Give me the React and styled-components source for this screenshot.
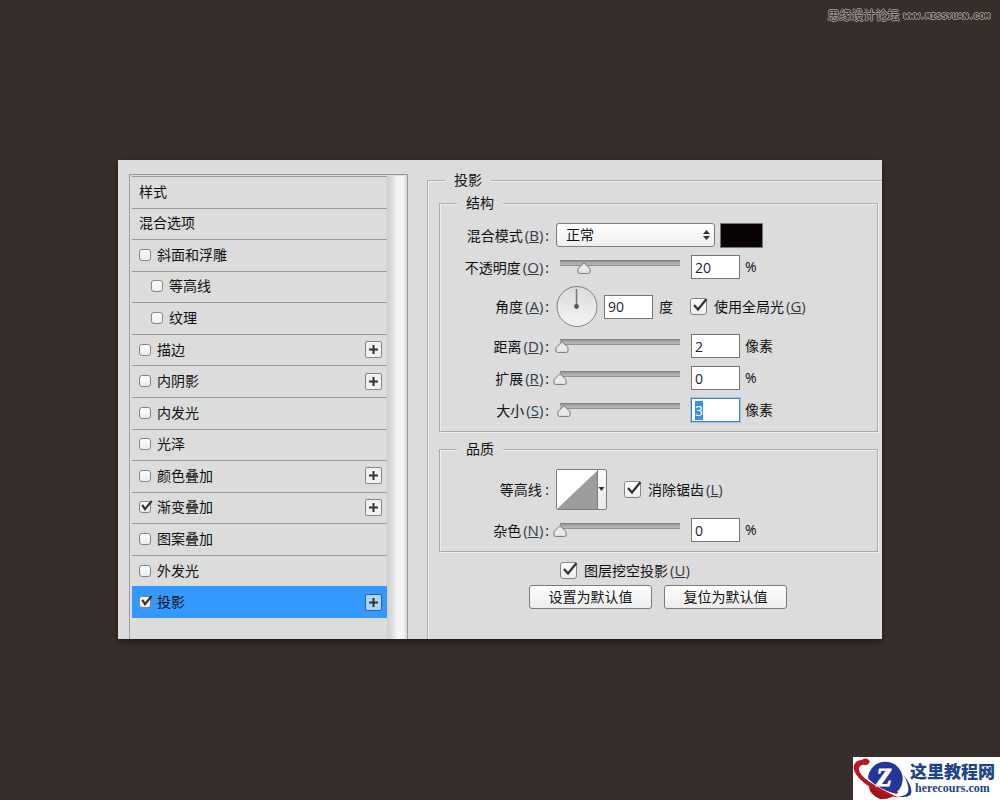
import React, { useEffect, useRef, useState } from 'react';
import styled, { createGlobalStyle, css } from 'styled-components';

const GlobalStyle = createGlobalStyle`
  * {
    box-sizing: border-box;
  }

  body {
    margin: 0;
    background: #372d2b;
    color: #111;
    font-family: "Open Sans", "Noto Sans CJK SC", sans-serif;
    font-size: 14px;
    line-height: 20px;
  }

  button, input, select {
    font: inherit;
    color: inherit;
    margin: 0;
  }
`;

const Page = styled.div`
  min-height: 100vh;
  display: grid;
  grid-template-rows: 160px auto 1fr;
`;

const TopBar = styled.header`
  display: flex;
  justify-content: flex-end;
  align-items: flex-start;
  gap: 4px;
  padding: 6px 10px;
  color: #2b2422;
  text-shadow: 1px 0 #a5a09c, -1px 0 #a5a09c, 0 1px #a5a09c, 0 -1px #a5a09c;
`;

const ForumName = styled.span`
  font-size: 12px;
`;

const ForumUrl = styled.span`
  font-family: "Liberation Mono", monospace;
  font-size: 9px;
  font-weight: 700;
  line-height: 22px;
`;

const Dialog = styled.main`
  display: grid;
  grid-template-columns: 279px 1fr;
  gap: 19px;
  margin: 0 118px;
  padding-left: 11px;
  background: #dcdcdc;
  box-shadow: 0 3px 6px rgba(0, 0, 0, 0.45);
  overflow: hidden;
`;

/* left side */

const StylePanel = styled.section`
  display: flex;
  margin-top: 14px;
  padding: 1px 0 0 2px;
  border: 1px solid #9a9a9a;
  border-bottom: 0;
`;

const StyleList = styled.ul`
  flex: 1;
  display: grid;
  grid-auto-rows: 1fr;
  margin: 0 0 21px;
  padding: 0;
  list-style: none;
`;

const StyleRow = styled.li`
  display: flex;
  align-items: center;
  gap: 6px;
  padding: 0 5px 1px ${({ $sub }) => ($sub ? '19px' : '7px')};
  border-top: 1px solid #9a9a9a;

  ${({ $active }) =>
    $active &&
    css`
      background: #3399ff;
      border-color: #3399ff;
    `}
`;

const StyleName = styled.label`
  flex: 1;
`;

const ScrollTrack = styled.div`
  width: 20px;
  background: linear-gradient(90deg, #cfcfcf, #dcdcdc 25%, #f4f4f4 50%, #f6f6f6 80%, #d6d6d6);
`;

const AddButton = styled.button`
  display: flex;
  align-items: center;
  justify-content: center;
  width: 17px;
  height: 17px;
  padding: 0;
  border: 1px solid ${({ $active }) => ($active ? '#2c5f95' : '#858585')};
  border-radius: 2px;
  background: ${({ $active }) => ($active ? '#a9d4fb' : '#f0f0f0')};
`;

const BoxFrame = styled.span`
  display: grid;
  flex: none;

  > * {
    grid-area: 1 / 1;
  }

  svg {
    pointer-events: none;
    overflow: visible;
  }
`;

const Box = styled.input`
  appearance: none;
  width: ${({ $size }) => $size}px;
  height: ${({ $size }) => $size}px;
  border: 1px solid #868686;
  border-radius: 3px;
  background: linear-gradient(#fff, #ececec);

  & + svg {
    visibility: hidden;
  }

  &:checked + svg {
    visibility: visible;
  }
`;

/* right side */

const Settings = styled.section`
  display: flex;
  padding-top: 9px;
`;

const Group = styled.fieldset`
  flex: 1;
  min-width: 0;
  margin: 0;
  padding: 0 4px 30px 11px;
  border: 1px solid #ababab;
  border-width: 1px 0 0 1px;
  box-shadow: inset 1px 1px #f0f0f0;
`;

const GroupTitle = styled.legend`
  margin-left: 6px;
  padding: 0 9px;
  height: 22px;
  line-height: 22px;
  background: #dcdcdc;
`;

const SubGroup = styled.fieldset`
  min-width: 0;
  margin: 0 0 5px;
  padding: 4px 0 5px;
  border: 1px solid #ababab;
  box-shadow: inset 1px 1px #f0f0f0, 1px 1px #f0f0f0;

  ${GroupTitle} {
    margin-left: 17px;
    height: 24px;
    line-height: 24px;
  }
`;

const Row = styled.div`
  display: grid;
  grid-template-columns: 109px 1fr;
  align-items: center;
  gap: 7px;
  min-height: 32px;
  padding: ${({ $pad = 0 }) => $pad}px 0;
`;

const RowLabel = styled.label`
  text-align: right;
  white-space: nowrap;
`;

const KeyText = styled.span`
  margin: 0 2px;
  color: #333b48;
  font-size: 15px;
`;

const Controls = styled.div`
  display: flex;
  align-items: center;
  gap: ${({ $gap = 5 }) => $gap}px;
`;

const SelectFrame = styled.div`
  display: grid;
  align-items: center;
  width: 159px;

  > * {
    grid-area: 1 / 1;
  }

  svg {
    justify-self: end;
    margin-right: 4px;
    pointer-events: none;
  }
`;

const Select = styled.select`
  appearance: none;
  height: 24px;
  padding: 0 9px;
  border: 1px solid #7c7c7c;
  border-radius: 3px;
  background: linear-gradient(#fff, #efefef);
`;

const Swatch = styled.button`
  width: 43px;
  height: 25px;
  border: 1px solid #777;
  background: #080203;
`;

const thumb = encodeURIComponent(
  '<svg xmlns="http://www.w3.org/2000/svg" width="14" height="12"><path d="M7 .8 13 6.5V10q0 1.4-1.4 1.4H2.4Q1 11.400 1 10V6.500Z" fill="#e9e9e9" stroke="#777"/></svg>'
);

const Slider = styled.input`
  appearance: none;
  width: 134px;
  height: 24px;
  margin: 0 -1px 0 -3px;
  background: linear-gradient(#868686 0 1px, #a6a6a6 2px, #b8b8b8 5px, #8f8f8f 5px) 7px 5px / calc(100% - 14px) 6px no-repeat;

  &::-webkit-slider-runnable-track {
    height: 24px;
  }

  &::-webkit-slider-thumb {
    appearance: none;
    width: 14px;
    height: 12px;
    margin-top: 7px;
    background: url("data:image/svg+xml,${thumb}");
  }
`;

const NumberBox = styled.input`
  width: 49px;
  height: 24px;
  padding: 0 3px;
  border: 1px solid #767676;
  border-radius: 0;
  background: #fff;
  color: #223;

  &:focus {
    outline: 1px solid #9cc3e8;
    border-color: #4a7fb5;
  }

  &::selection {
    background: #3390ec;
    color: #fff;
  }
`;

const Tick = styled.span`
  display: flex;
  align-items: center;
  gap: 7px;
  margin-left: ${({ $indent = 0 }) => $indent}px;
`;

const Dial = styled.button`
  display: flex;
  padding: 0;
  border: 0;
  background: none;
`;

const ContourButton = styled.button`
  display: flex;
  width: 51px;
  height: 41px;
  padding: 0;
  border: 1px solid #7c7c7c;
  border-radius: 2px;
  background: linear-gradient(#fdfdfd, #e8e8e8);
`;

const Knockout = styled.div`
  display: flex;
  align-items: center;
  height: 24px;
  margin: 6px 0 3px 121px;
`;

const Buttons = styled.div`
  display: flex;
  gap: 12px;
  margin-left: 90px;
`;

const PushButton = styled.button`
  width: 123px;
  height: 24px;
  padding: 0;
  border: 1px solid #7c7c7c;
  border-radius: 3px;
  background: linear-gradient(#fff, #ececec);
`;

/* site badge */

const Footer = styled.footer`
  display: flex;
  justify-content: flex-end;
  align-items: flex-end;
`;

const Badge = styled.a`
  display: flex;
  width: 147px;
  height: 43px;
  background: #fff;
  color: #1c4587;
  text-decoration: none;
`;

const BadgeText = styled.span`
  display: flex;
  flex-direction: column;
  align-items: center;
  margin-left: -3px;
  padding-top: 4px;
  font-family: "Noto Sans CJK SC", sans-serif;
  font-size: 17px;
  font-weight: 900;
`;

const BadgeUrl = styled.span`
  font-family: "Liberation Serif", serif;
  font-size: 12px;
  font-weight: 700;
  line-height: 14px;
`;

const styles = [
  { name: '样式', plain: true },
  { name: '混合选项', plain: true },
  { name: '斜面和浮雕' },
  { name: '等高线', sub: true },
  { name: '纹理', sub: true },
  { name: '描边', add: true },
  { name: '内阴影', add: true },
  { name: '内发光' },
  { name: '光泽' },
  { name: '颜色叠加', add: true },
  { name: '渐变叠加', add: true, checked: true },
  { name: '图案叠加' },
  { name: '外发光' },
  { name: '投影', add: true, checked: true, active: true },
];

const CheckBox = ({ id, size = 17, checked }) => (
  <BoxFrame>
    <Box id={id} type="checkbox" $size={size} defaultChecked={checked} />
    <svg width={size} height={size} viewBox="0 0 17 17" aria-hidden="true">
      {size > 12 ? (
        <path d="M4 7 8 11.500 16.500 1" fill="none" stroke="#333" strokeWidth="2.200" />
      ) : (
        <path d="M4.500 5.500 8.500 11.500 18 0" fill="none" stroke="#333" strokeWidth="3" />
      )}
    </svg>
  </BoxFrame>
);

const Key = ({ children }) => (
  <KeyText>
    (<u>{children}</u>)
  </KeyText>
);

const SliderRow = ({ id, label, hotkey, start, unit, focused }) => {
  const [value, setValue] = useState(start);
  const box = useRef(null);

  useEffect(() => {
    if (focused) {
      box.current.focus();
      box.current.select();
    }
  }, [focused]);

  return (
    <Row>
      <RowLabel htmlFor={id}>
        {label}
        <Key>{hotkey}</Key>:
      </RowLabel>
      <Controls>
        <Slider type="range" min="0" max="100" aria-label={label} value={value} onChange={(e) => setValue(e.target.value)} />
        <NumberBox id={id} ref={box} value={value} onChange={(e) => setValue(e.target.value)} />
        <span>{unit}</span>
      </Controls>
    </Row>
  );
};

const StyleSidebar = () => (
  <StylePanel>
    <StyleList>
      {styles.map(({ name, plain, sub, add, checked, active }, i) => (
        <StyleRow key={name} $sub={sub} $active={active}>
          {!plain && <CheckBox id={`style-${i}`} size={12} checked={checked} />}
          <StyleName as={plain ? 'span' : 'label'} htmlFor={plain ? undefined : `style-${i}`}>
            {name}
          </StyleName>
          {add && (
            <AddButton type="button" $active={active} aria-label={name}>
              <svg width="11" height="11" aria-hidden="true">
                <path d="M1 5.500h9M5.500 1v9" stroke="#333" strokeWidth="2" />
              </svg>
            </AddButton>
          )}
        </StyleRow>
      ))}
    </StyleList>
    <ScrollTrack />
  </StylePanel>
);

const ShadowSettings = () => (
  <Settings>
    <Group>
      <GroupTitle>投影</GroupTitle>
      <SubGroup>
        <GroupTitle>结构</GroupTitle>
        <Row>
          <RowLabel htmlFor="blend">
            混合模式<Key>B</Key>:
          </RowLabel>
          <Controls>
            <SelectFrame>
              <Select id="blend">
                <option>正常</option>
              </Select>
              <svg width="9" height="12" aria-hidden="true">
                <path d="M1 5 4.500 1 8 5ZM1 7h7l-3.500 4Z" fill="#333" />
              </svg>
            </SelectFrame>
            <Swatch type="button" aria-label="颜色" />
          </Controls>
        </Row>
        <SliderRow id="opacity" label="不透明度" hotkey="O" start="20" unit="%" />
        <Row $pad={3}>
          <RowLabel htmlFor="angle">
            角度<Key>A</Key>:
          </RowLabel>
          <Controls $gap={6}>
            <Dial type="button" aria-label="角度">
              <svg width="42" height="41" aria-hidden="true">
                <defs>
                  <linearGradient id="dialFill" x1="0" y1="0" x2="0" y2="1">
                    <stop offset="0" stopColor="#dadada" />
                    <stop offset="1" stopColor="#f4f4f4" />
                  </linearGradient>
                </defs>
                <circle cx="21" cy="20.500" r="20" fill="url(#dialFill)" stroke="#808080" />
                <path d="M20.500 3v18" stroke="#777" strokeWidth="1.500" />
                <circle cx="20.500" cy="20.500" r="2.400" fill="#555" />
              </svg>
            </Dial>
            <NumberBox id="angle" defaultValue="90" />
            <span>度</span>
            <Tick $indent={11}>
              <CheckBox id="global" checked />
              <label htmlFor="global">
                使用全局光<Key>G</Key>
              </label>
            </Tick>
          </Controls>
        </Row>
        <SliderRow id="distance" label="距离" hotkey="D" start="2" unit="像素" />
        <SliderRow id="spread" label="扩展" hotkey="R" start="0" unit="%" />
        <SliderRow id="size" label="大小" hotkey="S" start="3" unit="像素" focused />
      </SubGroup>
      <SubGroup>
        <GroupTitle>品质</GroupTitle>
        <Row $pad={4}>
          <RowLabel htmlFor="contour">等高线 :</RowLabel>
          <Controls>
            <ContourButton id="contour" type="button">
              <svg width="49" height="39" aria-hidden="true">
                <path d="M0 0h40v39H0Z" fill="#fff" />
                <path d="M0 39 40 1v38Z" fill="#9c9c9c" />
                <path d="M40.500 0v39" stroke="#7c7c7c" />
                <path d="M41.500 17h6l-3 4Z" fill="#333" />
              </svg>
            </ContourButton>
            <Tick $indent={12}>
              <CheckBox id="antialias" checked />
              <label htmlFor="antialias">
                消除锯齿<Key>L</Key>
              </label>
            </Tick>
          </Controls>
        </Row>
        <SliderRow id="noise" label="杂色" hotkey="N" start="0" unit="%" />
      </SubGroup>
      <Knockout>
        <Tick>
          <CheckBox id="knockout" checked />
          <label htmlFor="knockout">
            图层挖空投影<Key>U</Key>
          </label>
        </Tick>
      </Knockout>
      <Buttons>
        <PushButton type="button">设置为默认值</PushButton>
        <PushButton type="button">复位为默认值</PushButton>
      </Buttons>
    </Group>
  </Settings>
);

const App = () => (
  <>
    <GlobalStyle />
    <Page>
      <TopBar>
        <ForumName>思缘设计论坛</ForumName>
        <ForumUrl>WWW.MISSYUAN.COM</ForumUrl>
      </TopBar>
      <Dialog>
        <StyleSidebar />
        <ShadowSettings />
      </Dialog>
      <Footer>
        <Badge href="#">
          <svg width="60" height="43" viewBox="0 0 180 129" aria-hidden="true">
            <circle cx="97" cy="66" r="52" fill="#23379b" />
            <path d="M47 88Q84 116 138 104 116 128 82 126 52 116 47 88Z" fill="#a31217" />
            <path d="M38 62Q72 104 150 120" fill="none" stroke="#fff" strokeWidth="8" />
            <path d="M50 12Q40 0 28 8 2 10 2 34 6 62 56 94 98 116 138 122 84 98 46 72 14 48 18 32 24 20 38 24 48 24 50 12Z" fill="#bb161b" />
            <path d="M152 54Q184 96 172 114 160 124 132 118 164 118 166 102 168 84 152 54Z" fill="#23379b" />
            <text x="70" y="88" fontFamily="Liberation Serif, serif" fontSize="76" fontWeight="700" fontStyle="italic" fill="#fff" stroke="#fff" strokeWidth="3">
              Z
            </text>
          </svg>
          <BadgeText>
            这里教程网
            <BadgeUrl>herecours.com</BadgeUrl>
          </BadgeText>
        </Badge>
      </Footer>
    </Page>
  </>
);

export default App;
